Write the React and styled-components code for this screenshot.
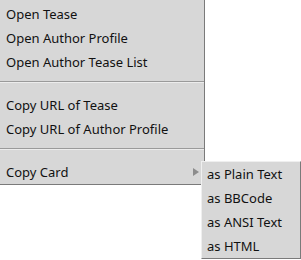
import styled, { createGlobalStyle } from "styled-components";

const Global = createGlobalStyle`
  html, body {
    margin: 0;
    background: #fff;
  }
`;

const Page = styled.div`
  position: relative;
  width: 301px;
  height: 260px;
  overflow: hidden;
  font-family: "Noto Sans", "Open Sans", sans-serif;
  font-size: 13px;
  color: #111;
`;

const Menu = styled.div`
  width: 204px;
  padding-top: 2px;
  background: #d7d7d7;
  border-right: 1px solid #7a7a7a;
  border-bottom: 1px solid #7a7a7a;
  display: flex;
  flex-direction: column;
`;

const SubMenu = styled(Menu)`
  position: absolute;
  left: 201px;
  top: 161px;
  width: 98px;
  padding-top: 0;
  border-left: 1px solid #efefef;
  border-top: 1px solid #efefef;
`;

const Item = styled.div`
  height: 24px;
  display: flex;
  align-items: center;
  justify-content: space-between;
  padding: 0 6px 0 ${(p) => p.$indent || 6}px;
  white-space: nowrap;
`;

const Separator = styled.div`
  height: 1px;
  margin: 7px 0 10px;
  background: #9a9a9a;
  border-bottom: 1px solid #ececec;
`;

const Arrow = styled.span`
  width: 0;
  height: 0;
  border-top: 4px solid transparent;
  border-bottom: 4px solid transparent;
  border-left: 6px solid #8c8c8c;
  margin-right: -1px;
`;

export default function App() {
  return (
    <Page>
      <Global />
      <Menu>
        <Item>Open Tease</Item>
        <Item>Open Author Profile</Item>
        <Item>Open Author Tease List</Item>
        <Separator />
        <Item>Copy URL of Tease</Item>
        <Item>Copy URL of Author Profile</Item>
        <Separator />
        <Item>
          Copy Card
          <Arrow />
        </Item>
      </Menu>
      <SubMenu>
        <Item $indent={5}>as Plain Text</Item>
        <Item $indent={5}>as BBCode</Item>
        <Item $indent={5}>as ANSI Text</Item>
        <Item $indent={5}>as HTML</Item>
      </SubMenu>
    </Page>
  );
}
